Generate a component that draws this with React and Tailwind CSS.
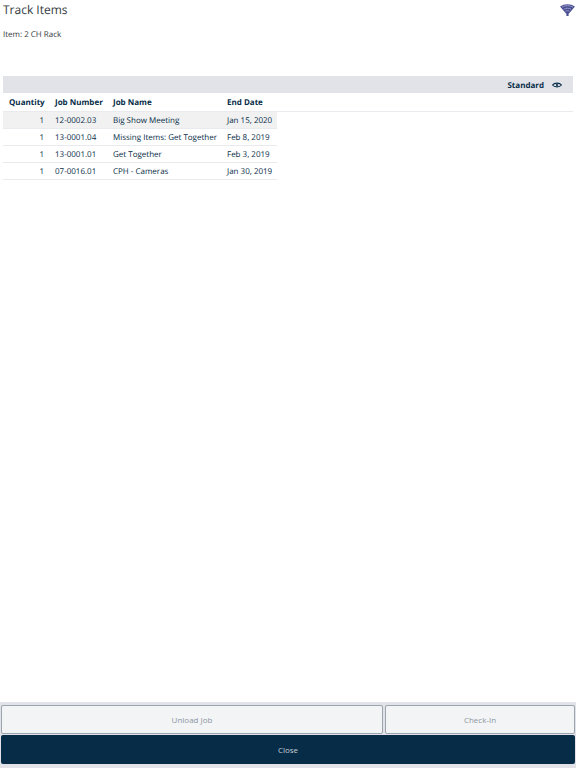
const f = { fontFamily: '"Open Sans", sans-serif' };

const rows = [
  ['1', '12-0002.03', 'Big Show Meeting', 'Jan 15, 2020', true],
  ['1', '13-0001.04', 'Missing Items: Get Together', 'Feb 8, 2019'],
  ['1', '13-0001.01', 'Get Together', 'Feb 3, 2019'],
  ['1', '07-0016.01', 'CPH - Cameras', 'Jan 30, 2019'],
];

function Wifi() {
  return (
    <svg width="15" height="12" viewBox="0 0 15 12" className="block">
      <path d="M0 2.6C4 -0.7 11 -0.7 15 2.6L9 9.6H8.6V12H6.4V9.6H6Z" fill="#4a4f93" />
      <path d="M2 3.2C5 1.2 10 1.2 13 3.2M3.8 5.3C5.8 3.9 9.2 3.9 11.2 5.3M5.4 7.3C6.6 6.5 8.4 6.5 9.6 7.3" stroke="#a9acd2" strokeWidth="0.8" fill="none" />
    </svg>
  );
}

function Eye() {
  return (
    <svg width="10" height="6" viewBox="0 0 10 6" fill="none" stroke="#062c47" strokeWidth="1.1" className="block">
      <path d="M0.5 3C2.5 0.5 7.5 0.5 9.5 3C7.5 5.5 2.5 5.5 0.5 3Z" />
      <circle cx="5" cy="3" r="1.1" fill="#062c47" stroke="none" />
    </svg>
  );
}

export default function App() {
  return (
    <div className="h-[768px] w-[576px] flex flex-col bg-white overflow-hidden [text-rendering:geometricPrecision]" style={f}>
      <div className="flex-1 px-[3px]">
        <div className="flex justify-between items-start h-[76px]">
          <div>
            <div className="pt-[1px] text-[12px] leading-[18px] text-[#333a40]">Track Items</div>
            <div className="mt-[8px] text-[8px] leading-[16px] text-[#333a40]">Item: 2 CH Rack</div>
          </div>
          <div className="pt-[4px] -mr-[2px]"><Wifi /></div>
        </div>
        <div className="h-[17px] w-[570px] bg-[#e1e3e9] flex items-center justify-end pr-[11px] gap-[8px] text-[#062c47]">
          <span className="pt-[2px] text-[8px] font-bold whitespace-nowrap">Standard</span>
          <Eye />
        </div>
        <div className="h-[19px] w-[570px] border-b border-[#e8eaed] flex items-center pt-[2px] text-[8px] font-bold text-[#062c47] whitespace-nowrap">
          <span className="w-[41px] pl-[6px]">Quantity</span>
          <span className="w-[69px] pl-[11px]">Job Number</span>
          <span className="w-[114px]">Job Name</span>
          <span>End Date</span>
        </div>
        {rows.map((r) => (
          <div key={r[1]} className={`h-[17px] w-[274px] border-b border-[#e8eaed] flex items-center pt-[1px] text-[8px] text-[#062c47] whitespace-nowrap ${r[4] ? 'bg-[#f1f1f1]' : ''}`}>
            <span className="w-[41px] text-right">{r[0]}</span>
            <span className="w-[69px] pl-[11px]">{r[1]}</span>
            <span className="w-[114px]">{r[2]}</span>
            <span>{r[3]}</span>
          </div>
        ))}
      </div>
      <div className="h-[66px] bg-[#e1e3e9] pt-[3px] px-[1px] flex flex-col gap-[1px]">
        <div className="flex gap-[2px] h-[29px]">
          <button className="w-[382px] rounded-[2px] border border-[#99a4ae] bg-[#f3f4f6] text-[8px] text-[#8a96a1]">Unload Job</button>
          <button className="flex-1 rounded-[2px] border border-[#99a4ae] bg-[#f3f4f6] text-[8px] text-[#8a96a1]">Check-In</button>
        </div>
        <button className="h-[29px] rounded-[2px] bg-[#062c47] text-[8px] text-[#c5ced6]">Close</button>
      </div>
    </div>
  );
}
